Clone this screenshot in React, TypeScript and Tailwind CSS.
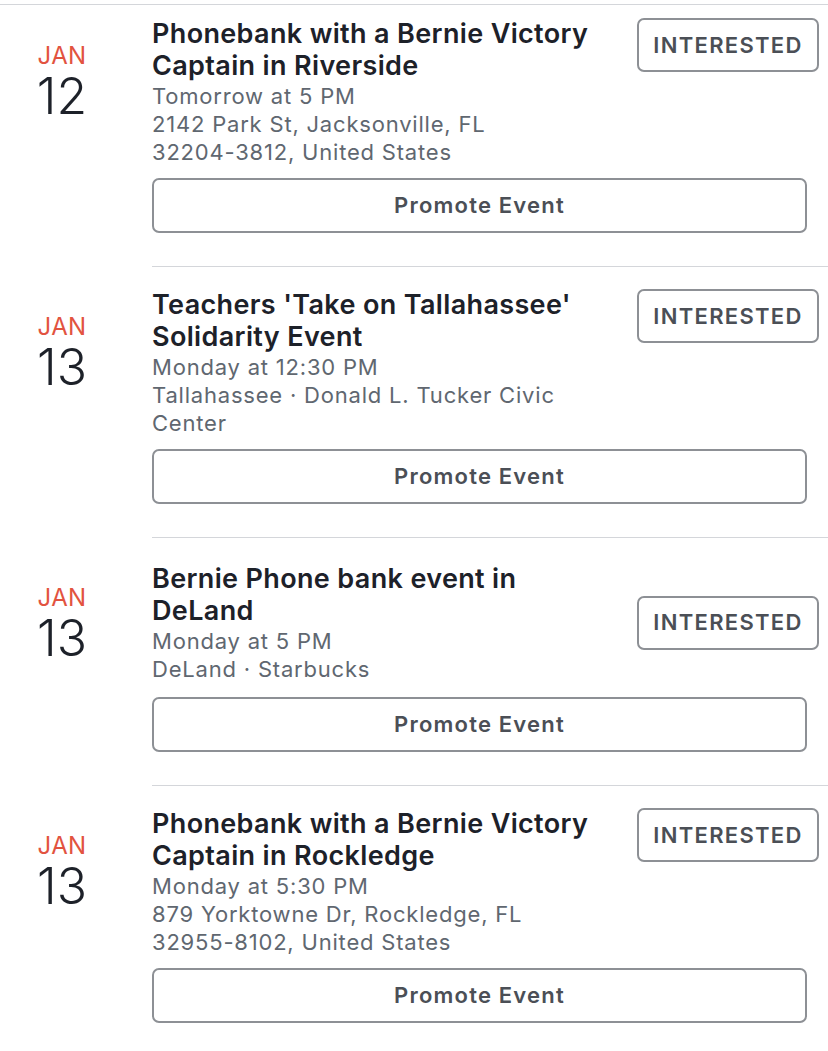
import React from 'react';

interface EventItem {
  day: string;
  title: string[];
  details: string[];
  centered?: boolean;
}

const events: EventItem[] = [
  {
    day: '12',
    title: ['Phonebank with a Bernie Victory', 'Captain in Riverside'],
    details: ['Tomorrow at 5 PM', '2142 Park St, Jacksonville, FL', '32204-3812, United States'],
  },
  {
    day: '13',
    title: ["Teachers 'Take on Tallahassee'", 'Solidarity Event'],
    details: ['Monday at 12:30 PM', 'Tallahassee · Donald L. Tucker Civic', 'Center'],
  },
  {
    day: '13',
    title: ['Bernie Phone bank event in', 'DeLand'],
    details: ['Monday at 5 PM', 'DeLand · Starbucks'],
    centered: true,
  },
  {
    day: '13',
    title: ['Phonebank with a Bernie Victory', 'Captain in Rockledge'],
    details: ['Monday at 5:30 PM', '879 Yorktowne Dr, Rockledge, FL', '32955-8102, United States'],
  },
];

const EventRow: React.FC<{ event: EventItem; first: boolean }> = ({ event, first }) => {
  return (
    <div className="flex">
      {/* Date */}
      <div className={`w-[152px] shrink-0 pr-[28px] flex flex-col items-center ${first ? 'pt-[37px]' : 'pt-[47px]'}`}>
        <div className="text-[24px] leading-[28px] text-[#e2533f] tracking-[0.3px]">JAN</div>
        <div className="text-[50px] leading-[52px] font-light text-[#1d2129]">{event.day}</div>
      </div>

      {/* Content */}
      <div
        className={`flex-1 pr-[9px] pb-[33px] ${first ? 'pt-[13px]' : 'pt-[22px] border-t border-[#d4d6da]'}`}
      >
        <div className={`flex justify-between ${event.centered ? 'items-center min-h-[125px]' : 'items-start'}`}>
          <div>
            {event.title.map((line) => (
              <div
                key={line}
                className="text-[27px] leading-[32px] font-semibold text-[#1d2129] tracking-[0.35px] whitespace-nowrap"
              >
                {line}
              </div>
            ))}
            {event.details.map((line) => (
              <div
                key={line}
                className="text-[22px] leading-[28px] text-[#606770] tracking-[0.8px] whitespace-nowrap"
              >
                {line}
              </div>
            ))}
          </div>
          <button
            type="button"
            className="w-[182px] h-[54px] shrink-0 border-2 border-[#8d9095] rounded-[7px] text-[22px] font-semibold text-[#4b4f56] tracking-[1.3px]"
          >
            INTERESTED
          </button>
        </div>
        <button
          type="button"
          className="w-[655px] h-[55px] mt-[12px] border-2 border-[#8d9095] rounded-[7px] text-[22px] font-semibold text-[#4b4f56] tracking-[1.2px]"
        >
          Promote Event
        </button>
      </div>
    </div>
  );
};

export default function App() {
  return (
    <div className="w-[828px] h-[1051px] overflow-hidden bg-white font-['Inter','Liberation_Sans',sans-serif]">
      <div className="h-[4px]" />
      <div className="border-t border-[#d4d6da]" />
      {events.map((event, i) => (
        <EventRow key={i} event={event} first={i === 0} />
      ))}
    </div>
  );
}
